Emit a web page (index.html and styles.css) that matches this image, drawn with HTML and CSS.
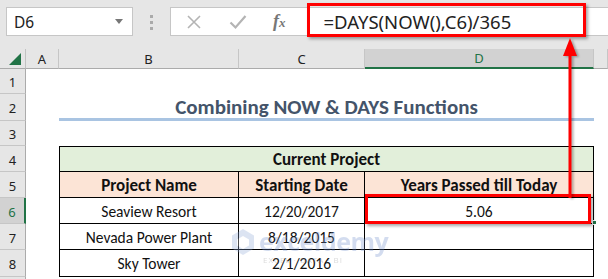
FILE: index.html
```html
<!DOCTYPE html>
<html lang="en">
<head>
    <meta charset="UTF-8">
    <title>Combining NOW &amp; DAYS Functions</title>
    <link rel="stylesheet" href="styles.css">
</head>
<body>
<div class="bar">
    <div class="name-box">
        <span>D6</span>
        <svg class="caret" width="8" height="5" viewBox="0 0 8 5"><path d="M0 0h8L4 5z" fill="#777"/></svg>
    </div>
    <div class="grip"><i></i><i></i><i></i></div>
    <div class="formula">
        <svg class="tool" width="16" height="16" viewBox="0 0 16 16"><path d="M2 2l12 12M14 2L2 14" stroke="#b4b4b4" stroke-width="1.6"/></svg>
        <svg class="tool" width="18" height="16" viewBox="0 0 18 16"><path d="M1.5 8.5l5 5L16.5 2" stroke="#b4b4b4" stroke-width="2.2" fill="none"/></svg>
        <span class="fx">f<sub>x</sub></span>
        <span class="formula-text">=DAYS(NOW(),C6)/365</span>
    </div>
</div>

<div class="sheet">
    <div class="corner"><i></i></div>
    <div class="ch">A</div>
    <div class="ch">B</div>
    <div class="ch">C</div>
    <div class="ch active">D</div>
    <div class="ch"></div>

    <div class="rh">1</div>
    <div class="blank"></div>

    <div class="rh">2</div>
    <div></div>
    <div class="title">Combining NOW &amp; DAYS Functions</div>
    <div></div>

    <div class="rh">3</div>
    <div class="blank"></div>

    <div class="rh">4</div>
    <div></div>
    <div class="t caption first top">Current Project</div>
    <div></div>

    <div class="rh">5</div>
    <div></div>
    <div class="t head first">Project Name</div>
    <div class="t head">Starting Date</div>
    <div class="t head">Years Passed till Today</div>
    <div></div>

    <div class="rh active">6</div>
    <div></div>
    <div class="t first">Seaview Resort</div>
    <div class="t">12/20/2017</div>
    <div class="t selected">5.06<i class="handle"></i></div>
    <div></div>

    <div class="rh">7</div>
    <div></div>
    <div class="t first">Nevada Power Plant</div>
    <div class="t">8/18/2015</div>
    <div class="t"></div>
    <div></div>

    <div class="rh">8</div>
    <div></div>
    <div class="t first">Sky Tower</div>
    <div class="t">2/1/2016</div>
    <div class="t"></div>
    <div></div>

    <div class="rh"></div>
    <div class="blank"></div>
</div>

<!-- watermark -->
<div class="mark">
    <svg width="26" height="28" viewBox="0 0 26 28"><path d="M13 1l11 6.5v13L13 27 2 20.5v-13z" fill="#8fa8d6"/><path d="M13 8l6 3.5v6L13 21l-6-3.5v-6z" fill="#fff"/></svg>
    <div>
        <div class="mark-name">exceldemy</div>
        <div class="mark-sub">EXCEL · DATA · BI</div>
    </div>
</div>

<!-- callouts -->
<div class="callout formula-box"></div>
<div class="callout cell-box"></div>
<div class="arrow">
    <svg width="16" height="160" viewBox="0 0 16 160"><path d="M8 0L1 18h14z" fill="#f00"/><rect x="6.5" y="16" width="3" height="144" fill="#f00"/></svg>
</div>
</body>
</html>
```

FILE: styles.css
```css
* {
    box-sizing: border-box;
}

body {
    margin: 0;
    width: 608px;
    height: 279px;
    overflow: hidden;
    position: relative;
    background: #fff;
    font-family: "Carlito", "Lato", sans-serif;
}

/* name box + formula bar */
.bar {
    height: 49px;
    background: #e6e6e6;
    display: flex;
    align-items: flex-start;
    padding-top: 7px;
    padding-left: 6px;
}

.name-box {
    width: 127px;
    height: 29px;
    background: #fff;
    border: 1px solid #c6c6c6;
    display: flex;
    align-items: center;
    justify-content: space-between;
    padding: 0 9px 0 7px;
    font-family: "Noto Sans", sans-serif;
    font-size: 15.5px;
    color: #222;
}

.grip {
    width: 37px;
    display: flex;
    flex-direction: column;
    align-items: center;
    gap: 3px;
    padding-top: 8px;
}

.grip i {
    width: 3px;
    height: 3px;
    background: #aaa;
}

.formula {
    flex: 1;
    height: 29px;
    background: #fff;
    border: 1px solid #c6c6c6;
    border-right: 0;
    display: flex;
    align-items: center;
    padding-left: 15px;
}

.tool {
    margin-right: 27px;
}

.fx {
    font-family: "Liberation Serif", serif;
    font-style: italic;
    font-weight: bold;
    font-size: 18px;
    color: #777;
    margin-left: -1px;
}

.fx sub {
    font-size: 13px;
    vertical-align: 0;
}

.formula-text {
    margin-left: 38px;
    font-family: "Noto Sans", sans-serif;
    font-size: 18.5px;
    color: #222;
}

/* worksheet grid */
.sheet {
    display: grid;
    grid-template-columns: 26px 33px 180px 126px 229px 1fr;
    grid-template-rows: 20px 25px 27px 25px 26px 26px 26px 26px 27px 2px;
}

.corner {
    background: #e6e6e6;
    border-right: 1px solid #c2c2c2;
    border-bottom: 1px solid #ababab;
    position: relative;
}

.corner i {
    position: absolute;
    right: 4px;
    bottom: 3px;
    border-style: solid;
    border-width: 0 0 12px 12px;
    border-color: transparent transparent #217346 transparent;
}

.ch {
    background: #e6e6e6;
    border-right: 1px solid #c6c6c6;
    border-bottom: 1px solid #ababab;
    display: flex;
    align-items: center;
    justify-content: center;
    font-family: "Noto Sans", sans-serif;
    font-size: 13px;
    color: #222;
}

.ch.active {
    background: #d2d2d2;
    border-bottom: 2px solid #217346;
    color: #217346;
}

.rh {
    grid-column: 1;
    background: #e6e6e6;
    border-right: 1px solid #ababab;
    border-bottom: 1px solid #c6c6c6;
    display: flex;
    align-items: center;
    justify-content: center;
    font-family: "Noto Sans", sans-serif;
    font-size: 13px;
    color: #222;
    padding-top: 2px;
}

.rh.active {
    background: #d2d2d2;
    border-right: 2px solid #217346;
    color: #217346;
}

.blank {
    grid-column: 2 / 7;
}

.title {
    grid-column: 3 / 6;
    border-bottom: 3px solid #a9c4e2;
    display: flex;
    align-items: center;
    justify-content: center;
    padding-top: 2px;
    font-size: 21px;
    font-weight: bold;
    color: #44546a;
}

/* data table */
.t {
    border-right: 1px solid #000;
    border-bottom: 1px solid #000;
    display: flex;
    align-items: center;
    justify-content: center;
    font-size: 15.5px;
    color: #111;
    padding-top: 1px;
}

.t.first {
    border-left: 1px solid #000;
}

.t.top {
    border-top: 1px solid #000;
}

.caption {
    grid-column: 3 / 6;
    background: #e2efda;
    font-weight: bold;
    font-size: 17px;
}

.head {
    background: #fce4d6;
    font-weight: bold;
    font-size: 17px;
}

.selected {
    position: relative;
}

.handle {
    position: absolute;
    right: -4px;
    bottom: -2px;
    width: 5px;
    height: 5px;
    background: #217346;
    border: 1px solid #fff;
}

/* faded logo over the table */
.mark {
    position: absolute;
    left: 230px;
    top: 228px;
    display: flex;
    align-items: flex-start;
    gap: 3px;
    opacity: 0.3;
}

.mark-name {
    font-family: "Open Sans", sans-serif;
    font-weight: bold;
    font-size: 25px;
    line-height: 26px;
    color: #6f8fcc;
    letter-spacing: -0.5px;
}

.mark-sub {
    font-family: "Open Sans", sans-serif;
    font-size: 8px;
    color: #888;
    letter-spacing: 1px;
    margin-left: 4px;
}

/* red annotations */
.callout {
    position: absolute;
    border: 3px solid #f00;
    box-shadow: 2px 2px 3px rgba(0, 0, 0, 0.35);
}

.formula-box {
    left: 307px;
    top: 3px;
    width: 279px;
    height: 34px;
}

.cell-box {
    left: 365px;
    top: 194px;
    width: 226px;
    height: 30px;
}

.arrow {
    position: absolute;
    left: 562px;
    top: 38px;
    line-height: 0;
    filter: drop-shadow(2px 1px 1px rgba(0, 0, 0, 0.3));
}
```
